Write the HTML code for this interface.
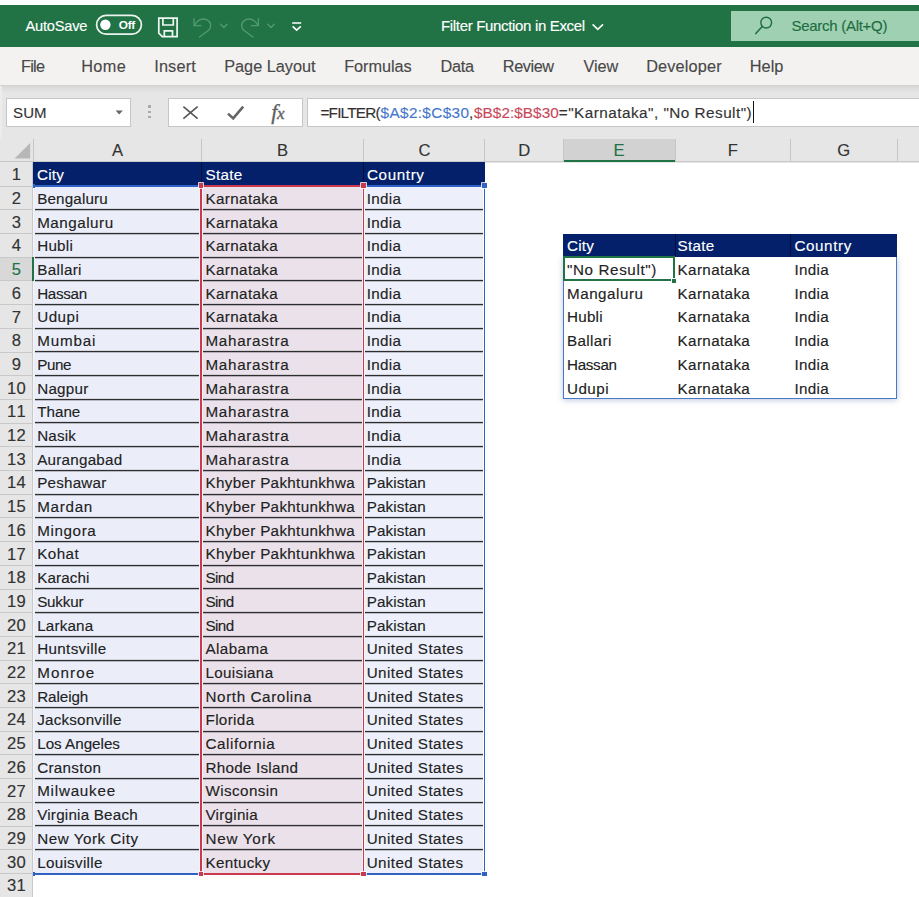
<!DOCTYPE html>
<html><head><meta charset="utf-8"><title>Filter Function in Excel</title>
<style>
html,body{margin:0;padding:0;background:#fff;}
body{width:919px;height:897px;position:relative;overflow:hidden;font-family:"Liberation Sans", sans-serif;}
.b{position:absolute;}
.t{position:absolute;-webkit-text-stroke:0.14px;white-space:pre;line-height:20px;font-family:"Liberation Sans", sans-serif;}
</style></head><body>
<div class="b" style="left:0.0px;top:5.0px;width:919.0px;height:42.0px;background:#217346;"></div>
<div class="b" style="left:731.0px;top:10.8px;width:188.0px;height:30.4px;background:#9fd0b2;"></div>
<div class="b" style="left:0.0px;top:47.0px;width:919.0px;height:37.5px;background:#f3f2f1;"></div>
<div class="b" style="left:0.0px;top:84.5px;width:919.0px;height:78.0px;background:#e6e6e6;"></div>
<div class="b" style="left:0.0px;top:84.5px;width:919.0px;height:8.0px;background:linear-gradient(#d1d1d1,#dcdcdc 35%,#e6e6e6);"></div>
<div class="b" style="left:0.0px;top:86.0px;width:2.0px;height:76.0px;background:#ececec;"></div>
<div class="b" style="left:6.3px;top:98.0px;width:124.7px;height:28.6px;background:#fff;border:1px solid #c6c6c6;box-sizing:border-box;"></div>
<div class="b" style="left:148.2px;top:105.3px;width:2.6px;height:2.6px;background:#aaa;"></div>
<div class="b" style="left:148.2px;top:110.5px;width:2.6px;height:2.6px;background:#aaa;"></div>
<div class="b" style="left:148.2px;top:115.7px;width:2.6px;height:2.6px;background:#aaa;"></div>
<div class="b" style="left:168.2px;top:98.0px;width:134.8px;height:28.6px;background:#fff;border:1px solid #c6c6c6;box-sizing:border-box;"></div>
<div class="b" style="left:306.5px;top:98.0px;width:620.0px;height:28.6px;background:#fff;border:1px solid #c6c6c6;box-sizing:border-box;"></div>
<div class="b" style="left:752.6px;top:101.3px;width:1.2px;height:21.4px;background:#111;"></div>
<div class="b" style="left:0.0px;top:139.3px;width:919.0px;height:23.1px;background:#e6e6e6;"></div>
<div class="b" style="left:563.0px;top:139.3px;width:112.0px;height:23.1px;background:#d2d2d2;border-bottom:2px solid #217346;box-sizing:border-box;"></div>
<div class="b" style="left:32.5px;top:138.8px;width:1.0px;height:23.6px;background:#c6c6c6;"></div>
<div class="b" style="left:200.8px;top:138.8px;width:1.0px;height:23.6px;background:#c6c6c6;"></div>
<div class="b" style="left:363.0px;top:138.8px;width:1.0px;height:23.6px;background:#c6c6c6;"></div>
<div class="b" style="left:484.0px;top:138.8px;width:1.0px;height:23.6px;background:#c6c6c6;"></div>
<div class="b" style="left:562.5px;top:138.8px;width:1.0px;height:23.6px;background:#c6c6c6;"></div>
<div class="b" style="left:674.5px;top:138.8px;width:1.0px;height:23.6px;background:#c6c6c6;"></div>
<div class="b" style="left:789.5px;top:138.8px;width:1.0px;height:23.6px;background:#c6c6c6;"></div>
<div class="b" style="left:896.5px;top:138.8px;width:1.0px;height:23.6px;background:#c6c6c6;"></div>
<div class="b" style="left:0.0px;top:161.4px;width:563.0px;height:1.0px;background:#c9c9c9;"></div>
<div class="b" style="left:675.0px;top:161.4px;width:244.0px;height:1.0px;background:#c9c9c9;"></div>
<div class="b" style="left:0.0px;top:162.4px;width:33.0px;height:734.6px;background:#e6e6e6;"></div>
<div class="b" style="left:0.0px;top:257.2px;width:33.0px;height:23.7px;background:#d8d8d8;"></div>
<div class="b" style="left:0.0px;top:185.6px;width:33.0px;height:1.0px;background:#c9c9c9;"></div>
<div class="b" style="left:0.0px;top:209.3px;width:33.0px;height:1.0px;background:#c9c9c9;"></div>
<div class="b" style="left:0.0px;top:233.0px;width:33.0px;height:1.0px;background:#c9c9c9;"></div>
<div class="b" style="left:0.0px;top:256.7px;width:33.0px;height:1.0px;background:#c9c9c9;"></div>
<div class="b" style="left:0.0px;top:280.4px;width:33.0px;height:1.0px;background:#c9c9c9;"></div>
<div class="b" style="left:0.0px;top:304.1px;width:33.0px;height:1.0px;background:#c9c9c9;"></div>
<div class="b" style="left:0.0px;top:327.8px;width:33.0px;height:1.0px;background:#c9c9c9;"></div>
<div class="b" style="left:0.0px;top:351.5px;width:33.0px;height:1.0px;background:#c9c9c9;"></div>
<div class="b" style="left:0.0px;top:375.2px;width:33.0px;height:1.0px;background:#c9c9c9;"></div>
<div class="b" style="left:0.0px;top:398.9px;width:33.0px;height:1.0px;background:#c9c9c9;"></div>
<div class="b" style="left:0.0px;top:422.6px;width:33.0px;height:1.0px;background:#c9c9c9;"></div>
<div class="b" style="left:0.0px;top:446.3px;width:33.0px;height:1.0px;background:#c9c9c9;"></div>
<div class="b" style="left:0.0px;top:470.0px;width:33.0px;height:1.0px;background:#c9c9c9;"></div>
<div class="b" style="left:0.0px;top:493.7px;width:33.0px;height:1.0px;background:#c9c9c9;"></div>
<div class="b" style="left:0.0px;top:517.4px;width:33.0px;height:1.0px;background:#c9c9c9;"></div>
<div class="b" style="left:0.0px;top:541.1px;width:33.0px;height:1.0px;background:#c9c9c9;"></div>
<div class="b" style="left:0.0px;top:564.8px;width:33.0px;height:1.0px;background:#c9c9c9;"></div>
<div class="b" style="left:0.0px;top:588.5px;width:33.0px;height:1.0px;background:#c9c9c9;"></div>
<div class="b" style="left:0.0px;top:612.2px;width:33.0px;height:1.0px;background:#c9c9c9;"></div>
<div class="b" style="left:0.0px;top:635.9px;width:33.0px;height:1.0px;background:#c9c9c9;"></div>
<div class="b" style="left:0.0px;top:659.6px;width:33.0px;height:1.0px;background:#c9c9c9;"></div>
<div class="b" style="left:0.0px;top:683.3px;width:33.0px;height:1.0px;background:#c9c9c9;"></div>
<div class="b" style="left:0.0px;top:707.0px;width:33.0px;height:1.0px;background:#c9c9c9;"></div>
<div class="b" style="left:0.0px;top:730.7px;width:33.0px;height:1.0px;background:#c9c9c9;"></div>
<div class="b" style="left:0.0px;top:754.4px;width:33.0px;height:1.0px;background:#c9c9c9;"></div>
<div class="b" style="left:0.0px;top:778.1px;width:33.0px;height:1.0px;background:#c9c9c9;"></div>
<div class="b" style="left:0.0px;top:801.8px;width:33.0px;height:1.0px;background:#c9c9c9;"></div>
<div class="b" style="left:0.0px;top:825.5px;width:33.0px;height:1.0px;background:#c9c9c9;"></div>
<div class="b" style="left:0.0px;top:849.2px;width:33.0px;height:1.0px;background:#c9c9c9;"></div>
<div class="b" style="left:0.0px;top:872.9px;width:33.0px;height:1.0px;background:#c9c9c9;"></div>
<div class="b" style="left:32.0px;top:162.4px;width:1.0px;height:734.6px;background:#c9c9c9;"></div>
<svg class="b" style="left:14px;top:143.4px" width="18" height="18"><polygon points="16.2,0 16.2,15.4 0.6,15.4" fill="#b7b7b7"/></svg>
<div class="b" style="left:33.0px;top:162.4px;width:451.5px;height:23.7px;background:#04206a;"></div>
<div class="b" style="left:33.0px;top:186.1px;width:168.3px;height:687.3px;background:#ebeef9;"></div>
<div class="b" style="left:201.3px;top:186.1px;width:162.2px;height:687.3px;background:#eae1ea;"></div>
<div class="b" style="left:363.5px;top:186.1px;width:121.0px;height:687.3px;background:#edf0fa;"></div>
<div class="b" style="left:200.8px;top:162.4px;width:1.0px;height:23.7px;background:#02103f;"></div>
<div class="b" style="left:363.0px;top:162.4px;width:1.0px;height:23.7px;background:#02103f;"></div>
<div class="b" style="left:34.5px;top:209.0px;width:450.0px;height:1.0px;background:#2e2e2e;box-shadow:0 1px 0 rgba(50,50,60,.28), 0 -1px 0 rgba(50,50,60,.12);"></div>
<div class="b" style="left:34.5px;top:233.0px;width:450.0px;height:1.0px;background:#2e2e2e;box-shadow:0 1px 0 rgba(50,50,60,.28), 0 -1px 0 rgba(50,50,60,.12);"></div>
<div class="b" style="left:34.5px;top:257.0px;width:450.0px;height:1.0px;background:#2e2e2e;box-shadow:0 1px 0 rgba(50,50,60,.28), 0 -1px 0 rgba(50,50,60,.12);"></div>
<div class="b" style="left:34.5px;top:280.0px;width:450.0px;height:1.0px;background:#2e2e2e;box-shadow:0 1px 0 rgba(50,50,60,.28), 0 -1px 0 rgba(50,50,60,.12);"></div>
<div class="b" style="left:34.5px;top:304.0px;width:450.0px;height:1.0px;background:#2e2e2e;box-shadow:0 1px 0 rgba(50,50,60,.28), 0 -1px 0 rgba(50,50,60,.12);"></div>
<div class="b" style="left:34.5px;top:328.0px;width:450.0px;height:1.0px;background:#2e2e2e;box-shadow:0 1px 0 rgba(50,50,60,.28), 0 -1px 0 rgba(50,50,60,.12);"></div>
<div class="b" style="left:34.5px;top:351.0px;width:450.0px;height:1.0px;background:#2e2e2e;box-shadow:0 1px 0 rgba(50,50,60,.28), 0 -1px 0 rgba(50,50,60,.12);"></div>
<div class="b" style="left:34.5px;top:375.0px;width:450.0px;height:1.0px;background:#2e2e2e;box-shadow:0 1px 0 rgba(50,50,60,.28), 0 -1px 0 rgba(50,50,60,.12);"></div>
<div class="b" style="left:34.5px;top:399.0px;width:450.0px;height:1.0px;background:#2e2e2e;box-shadow:0 1px 0 rgba(50,50,60,.28), 0 -1px 0 rgba(50,50,60,.12);"></div>
<div class="b" style="left:34.5px;top:422.0px;width:450.0px;height:1.0px;background:#2e2e2e;box-shadow:0 1px 0 rgba(50,50,60,.28), 0 -1px 0 rgba(50,50,60,.12);"></div>
<div class="b" style="left:34.5px;top:446.0px;width:450.0px;height:1.0px;background:#2e2e2e;box-shadow:0 1px 0 rgba(50,50,60,.28), 0 -1px 0 rgba(50,50,60,.12);"></div>
<div class="b" style="left:34.5px;top:470.0px;width:450.0px;height:1.0px;background:#2e2e2e;box-shadow:0 1px 0 rgba(50,50,60,.28), 0 -1px 0 rgba(50,50,60,.12);"></div>
<div class="b" style="left:34.5px;top:494.0px;width:450.0px;height:1.0px;background:#2e2e2e;box-shadow:0 1px 0 rgba(50,50,60,.28), 0 -1px 0 rgba(50,50,60,.12);"></div>
<div class="b" style="left:34.5px;top:517.0px;width:450.0px;height:1.0px;background:#2e2e2e;box-shadow:0 1px 0 rgba(50,50,60,.28), 0 -1px 0 rgba(50,50,60,.12);"></div>
<div class="b" style="left:34.5px;top:541.0px;width:450.0px;height:1.0px;background:#2e2e2e;box-shadow:0 1px 0 rgba(50,50,60,.28), 0 -1px 0 rgba(50,50,60,.12);"></div>
<div class="b" style="left:34.5px;top:565.0px;width:450.0px;height:1.0px;background:#2e2e2e;box-shadow:0 1px 0 rgba(50,50,60,.28), 0 -1px 0 rgba(50,50,60,.12);"></div>
<div class="b" style="left:34.5px;top:588.0px;width:450.0px;height:1.0px;background:#2e2e2e;box-shadow:0 1px 0 rgba(50,50,60,.28), 0 -1px 0 rgba(50,50,60,.12);"></div>
<div class="b" style="left:34.5px;top:612.0px;width:450.0px;height:1.0px;background:#2e2e2e;box-shadow:0 1px 0 rgba(50,50,60,.28), 0 -1px 0 rgba(50,50,60,.12);"></div>
<div class="b" style="left:34.5px;top:636.0px;width:450.0px;height:1.0px;background:#2e2e2e;box-shadow:0 1px 0 rgba(50,50,60,.28), 0 -1px 0 rgba(50,50,60,.12);"></div>
<div class="b" style="left:34.5px;top:660.0px;width:450.0px;height:1.0px;background:#2e2e2e;box-shadow:0 1px 0 rgba(50,50,60,.28), 0 -1px 0 rgba(50,50,60,.12);"></div>
<div class="b" style="left:34.5px;top:683.0px;width:450.0px;height:1.0px;background:#2e2e2e;box-shadow:0 1px 0 rgba(50,50,60,.28), 0 -1px 0 rgba(50,50,60,.12);"></div>
<div class="b" style="left:34.5px;top:707.0px;width:450.0px;height:1.0px;background:#2e2e2e;box-shadow:0 1px 0 rgba(50,50,60,.28), 0 -1px 0 rgba(50,50,60,.12);"></div>
<div class="b" style="left:34.5px;top:731.0px;width:450.0px;height:1.0px;background:#2e2e2e;box-shadow:0 1px 0 rgba(50,50,60,.28), 0 -1px 0 rgba(50,50,60,.12);"></div>
<div class="b" style="left:34.5px;top:754.0px;width:450.0px;height:1.0px;background:#2e2e2e;box-shadow:0 1px 0 rgba(50,50,60,.28), 0 -1px 0 rgba(50,50,60,.12);"></div>
<div class="b" style="left:34.5px;top:778.0px;width:450.0px;height:1.0px;background:#2e2e2e;box-shadow:0 1px 0 rgba(50,50,60,.28), 0 -1px 0 rgba(50,50,60,.12);"></div>
<div class="b" style="left:34.5px;top:802.0px;width:450.0px;height:1.0px;background:#2e2e2e;box-shadow:0 1px 0 rgba(50,50,60,.28), 0 -1px 0 rgba(50,50,60,.12);"></div>
<div class="b" style="left:34.5px;top:825.0px;width:450.0px;height:1.0px;background:#2e2e2e;box-shadow:0 1px 0 rgba(50,50,60,.28), 0 -1px 0 rgba(50,50,60,.12);"></div>
<div class="b" style="left:34.5px;top:849.0px;width:450.0px;height:1.0px;background:#2e2e2e;box-shadow:0 1px 0 rgba(50,50,60,.28), 0 -1px 0 rgba(50,50,60,.12);"></div>
<div class="b" style="left:33.0px;top:184.5px;width:452.5px;height:2.0px;background:#2f62c4;"></div>
<div class="b" style="left:33.0px;top:872.8px;width:452.5px;height:2.0px;background:#2f62c4;"></div>
<div class="b" style="left:483.6px;top:185.1px;width:1.7px;height:688.8px;background:#2f62c4;box-shadow:0 0 0 1px #fff;"></div>
<div class="b" style="left:32.8px;top:186.1px;width:1.4px;height:687.3px;background:#f4f4f8;"></div>
<div class="b" style="left:200.4px;top:184.5px;width:1.7px;height:690.3px;background:#c93a4e;box-shadow:0 0 0 1px #f7f3f7;"></div>
<div class="b" style="left:362.6px;top:184.5px;width:1.7px;height:690.3px;background:#c93a4e;box-shadow:0 0 0 1px #f7f3f7;"></div>
<div class="b" style="left:201.3px;top:184.5px;width:162.2px;height:2.0px;background:#c93a4e;"></div>
<div class="b" style="left:201.3px;top:872.8px;width:162.2px;height:2.0px;background:#c93a4e;"></div>
<div class="b" style="left:199.1px;top:183.3px;width:4.4px;height:4.4px;background:#c93a4e;box-shadow:0 0 0 0.8px #fff;"></div>
<div class="b" style="left:361.3px;top:183.3px;width:4.4px;height:4.4px;background:#c93a4e;box-shadow:0 0 0 0.8px #fff;"></div>
<div class="b" style="left:482.3px;top:183.3px;width:4.4px;height:4.4px;background:#2f62c4;box-shadow:0 0 0 0.8px #fff;"></div>
<div class="b" style="left:32.5px;top:183.5px;width:2.0px;height:4.0px;background:#2f62c4;"></div>
<div class="b" style="left:199.1px;top:871.6px;width:4.4px;height:4.4px;background:#c93a4e;box-shadow:0 0 0 0.8px #fff;"></div>
<div class="b" style="left:361.3px;top:871.6px;width:4.4px;height:4.4px;background:#c93a4e;box-shadow:0 0 0 0.8px #fff;"></div>
<div class="b" style="left:482.3px;top:871.6px;width:4.4px;height:4.4px;background:#2f62c4;box-shadow:0 0 0 0.8px #fff;"></div>
<div class="b" style="left:32.5px;top:871.8px;width:2.0px;height:4.0px;background:#2f62c4;"></div>
<div class="b" style="left:563.0px;top:233.5px;width:334.0px;height:23.7px;background:#04206a;"></div>
<div class="b" style="left:674.5px;top:233.5px;width:1.0px;height:23.7px;background:#02103f;"></div>
<div class="b" style="left:789.5px;top:233.5px;width:1.0px;height:23.7px;background:#02103f;"></div>
<div class="b" style="left:563.0px;top:256.7px;width:334.0px;height:142.5px;border:1px solid #4a78c8;border-top:none;box-sizing:border-box;box-shadow:0 1px 6px rgba(60,90,160,.35);"></div>
<div class="b" style="left:563.0px;top:233.5px;width:334.0px;height:23.7px;background:#04206a;"></div>
<div class="b" style="left:674.5px;top:233.5px;width:1.0px;height:23.7px;background:#02103f;"></div>
<div class="b" style="left:789.5px;top:233.5px;width:1.0px;height:23.7px;background:#02103f;"></div>
<div class="b" style="left:562.5px;top:256.2px;width:112.5px;height:25.3px;background:#fff;border:2px solid #217346;box-sizing:border-box;"></div>
<div class="b" style="left:672.4px;top:278.9px;width:4.0px;height:4.0px;background:#217346;box-shadow:0 0 0 1px #fff;"></div>
<div class="b" style="left:31.8px;top:256.8px;width:2.2px;height:24.3px;background:#217346;"></div>
<svg class="b" style="left:0;top:0" width="919" height="140" viewBox="0 0 919 140" fill="none">
<!-- autosave toggle -->
<rect x="96.6" y="15.4" width="44.8" height="18.8" rx="9.4" stroke="#eaf5ee" stroke-width="1.7"/>
<circle cx="105.4" cy="24.8" r="5.2" fill="#fff"/>
<!-- save icon -->
<path d="M158.8 18.2 H177.1 V36.6 H162.3 L158.8 33.1 Z" stroke="#f0f8f3" stroke-width="1.7"/>
<path d="M162.9 18.2 V25 H173.3 V18.2" stroke="#f0f8f3" stroke-width="1.7"/>
<path d="M164.3 36.6 V30.8 H172.5 V36.6" stroke="#f0f8f3" stroke-width="1.7"/>
<!-- undo -->
<g stroke="#539873" stroke-width="1.4" stroke-linecap="round" stroke-linejoin="round">
<path d="M194 18.6 V25.6 H201"/>
<path d="M194.6 25 C197 20.5 202 17.8 206.5 19.6 C211 21.6 212 26.5 209 30 L199.5 37"/>
<path d="M220.6 24.3 L223.8 27.5 L227 24.3"/>
<!-- redo -->
<path d="M258.4 18.6 V25.6 H251.4"/>
<path d="M257.8 25 C255.4 20.5 250.4 17.8 245.9 19.6 C241.4 21.6 240.4 26.5 243.4 30 L252.9 37"/>
<path d="M267.8 24.3 L271 27.5 L274.2 24.3"/>
</g>
<!-- QAT customize -->
<path d="M292.2 23 H301.2" stroke="#fff" stroke-width="1.5"/>
<path d="M292.6 26.4 L296.7 30.2 L300.8 26.4" stroke="#fff" stroke-width="1.6"/>
<!-- title chevron -->
<path d="M592.6 24.4 L597.8 29.4 L603 24.4" stroke="#f0f8f3" stroke-width="1.7"/>
<!-- search icon -->
<circle cx="766.2" cy="22.6" r="5.4" stroke="#1e6c41" stroke-width="1.4"/>
<path d="M762.2 26.6 L755.8 33.6" stroke="#1e6c41" stroke-width="1.5" stroke-linecap="round"/>
<!-- name box arrow -->
<path d="M115.6 110.6 H122.8 L119.2 114.6 Z" fill="#666"/>
<!-- cancel X -->
<path d="M183.4 106.6 L197.6 118.6 M197.6 106.6 L183.4 118.6" stroke="#555" stroke-width="1.6"/>
<!-- check -->
<path d="M228 113.6 L233.2 118.4 L243.2 106.6" stroke="#666" stroke-width="2.6"/>
</svg>
<span class="t" style="left:271.2px;top:100.4px;font-size:22px;line-height:24px;font-style:italic;font-weight:400;color:#606060;-webkit-text-stroke:0.35px #606060;font-family:'Liberation Serif',serif;letter-spacing:-0.4px">f<span style="font-size:17px">x</span></span>

<span class="t" style="left:25.5px;top:15.6px;font-size:14.6px;color:#fff;letter-spacing:-0.19px;">AutoSave</span>
<span class="t" style="left:118.8px;top:14.9px;font-size:11.8px;color:#fff;letter-spacing:-0.27px;font-weight:700;-webkit-text-stroke:0;">Off</span>
<span class="t" style="left:441.0px;top:16.1px;font-size:15px;color:#fff;letter-spacing:-0.33px;">Filter Function in Excel</span>
<span class="t" style="left:791.5px;top:16.2px;font-size:15px;color:#1e6c41;letter-spacing:-0.28px;">Search (Alt+Q)</span>
<span class="t" style="left:21.0px;top:56.2px;font-size:16.3px;color:#484848;letter-spacing:-0.75px;">File</span>
<span class="t" style="left:81.2px;top:56.2px;font-size:16.3px;color:#484848;letter-spacing:0.39px;">Home</span>
<span class="t" style="left:154.2px;top:56.2px;font-size:16.3px;color:#484848;letter-spacing:0.17px;">Insert</span>
<span class="t" style="left:224.2px;top:56.2px;font-size:16.3px;color:#484848;">Page Layout</span>
<span class="t" style="left:344.2px;top:56.2px;font-size:16.3px;color:#484848;letter-spacing:-0.05px;">Formulas</span>
<span class="t" style="left:440.4px;top:56.2px;font-size:16.3px;color:#484848;letter-spacing:-0.24px;">Data</span>
<span class="t" style="left:502.8px;top:56.2px;font-size:16.3px;color:#484848;letter-spacing:-0.42px;">Review</span>
<span class="t" style="left:583.4px;top:56.2px;font-size:16.3px;color:#484848;letter-spacing:-0.07px;">View</span>
<span class="t" style="left:646.2px;top:56.2px;font-size:16.3px;color:#484848;letter-spacing:0.16px;">Developer</span>
<span class="t" style="left:749.7px;top:56.2px;font-size:16.3px;color:#484848;letter-spacing:0.07px;">Help</span>
<span class="t" style="left:13.0px;top:103.1px;font-size:15px;color:#333;letter-spacing:0.13px;">SUM</span>
<span class="t" style="left:320.4px;top:103.0px;font-size:15.3px;color:#333;letter-spacing:-0.77px;">=FILTER(</span>
<span class="t" style="left:380.6px;top:103.0px;font-size:15.3px;color:#4576cc;letter-spacing:0.36px;">$A$2:$C$30</span>
<span class="t" style="left:468.9px;top:103.0px;font-size:15.3px;color:#333;">,</span>
<span class="t" style="left:474.0px;top:103.0px;font-size:15.3px;color:#c8485a;letter-spacing:0.06px;">$B$2:$B$30</span>
<span class="t" style="left:558.8px;top:103.0px;font-size:15.3px;color:#333;letter-spacing:0.47px;">="Karnataka", "No Result")</span>
<span class="t" style="left:112.1px;top:141.2px;font-size:16.6px;color:#333;">A</span>
<span class="t" style="left:277.0px;top:141.2px;font-size:16.6px;color:#333;">B</span>
<span class="t" style="left:418.5px;top:141.2px;font-size:16.6px;color:#333;">C</span>
<span class="t" style="left:518.3px;top:141.2px;font-size:16.6px;color:#333;">D</span>
<span class="t" style="left:613.5px;top:141.2px;font-size:16.6px;color:#217346;">E</span>
<span class="t" style="left:727.7px;top:141.2px;font-size:16.6px;color:#333;">F</span>
<span class="t" style="left:837.3px;top:141.2px;font-size:16.6px;color:#333;">G</span>
<span class="t" style="left:11.7px;top:165.3px;font-size:16.6px;color:#333;">1</span>
<span class="t" style="left:11.7px;top:189.0px;font-size:16.6px;color:#333;">2</span>
<span class="t" style="left:11.7px;top:212.7px;font-size:16.6px;color:#333;">3</span>
<span class="t" style="left:11.7px;top:236.4px;font-size:16.6px;color:#333;">4</span>
<span class="t" style="left:11.7px;top:260.1px;font-size:16.6px;color:#217346;">5</span>
<span class="t" style="left:11.7px;top:283.8px;font-size:16.6px;color:#333;">6</span>
<span class="t" style="left:11.7px;top:307.5px;font-size:16.6px;color:#333;">7</span>
<span class="t" style="left:11.7px;top:331.2px;font-size:16.6px;color:#333;">8</span>
<span class="t" style="left:11.7px;top:354.9px;font-size:16.6px;color:#333;">9</span>
<span class="t" style="left:6.9px;top:378.6px;font-size:16.6px;color:#333;letter-spacing:0.39px;">10</span>
<span class="t" style="left:6.9px;top:402.3px;font-size:16.6px;color:#333;letter-spacing:1.62px;">11</span>
<span class="t" style="left:6.9px;top:426.0px;font-size:16.6px;color:#333;letter-spacing:0.39px;">12</span>
<span class="t" style="left:6.9px;top:449.7px;font-size:16.6px;color:#333;letter-spacing:0.39px;">13</span>
<span class="t" style="left:6.9px;top:473.4px;font-size:16.6px;color:#333;letter-spacing:0.39px;">14</span>
<span class="t" style="left:6.9px;top:497.1px;font-size:16.6px;color:#333;letter-spacing:0.39px;">15</span>
<span class="t" style="left:6.9px;top:520.8px;font-size:16.6px;color:#333;letter-spacing:0.39px;">16</span>
<span class="t" style="left:6.9px;top:544.5px;font-size:16.6px;color:#333;letter-spacing:0.39px;">17</span>
<span class="t" style="left:6.9px;top:568.2px;font-size:16.6px;color:#333;letter-spacing:0.39px;">18</span>
<span class="t" style="left:6.9px;top:591.9px;font-size:16.6px;color:#333;letter-spacing:0.39px;">19</span>
<span class="t" style="left:6.9px;top:615.6px;font-size:16.6px;color:#333;letter-spacing:0.39px;">20</span>
<span class="t" style="left:6.9px;top:639.3px;font-size:16.6px;color:#333;letter-spacing:0.39px;">21</span>
<span class="t" style="left:6.9px;top:663.0px;font-size:16.6px;color:#333;letter-spacing:0.39px;">22</span>
<span class="t" style="left:6.9px;top:686.7px;font-size:16.6px;color:#333;letter-spacing:0.39px;">23</span>
<span class="t" style="left:6.9px;top:710.4px;font-size:16.6px;color:#333;letter-spacing:0.39px;">24</span>
<span class="t" style="left:6.9px;top:734.1px;font-size:16.6px;color:#333;letter-spacing:0.39px;">25</span>
<span class="t" style="left:6.9px;top:757.8px;font-size:16.6px;color:#333;letter-spacing:0.39px;">26</span>
<span class="t" style="left:6.9px;top:781.5px;font-size:16.6px;color:#333;letter-spacing:0.39px;">27</span>
<span class="t" style="left:6.9px;top:805.2px;font-size:16.6px;color:#333;letter-spacing:0.39px;">28</span>
<span class="t" style="left:6.9px;top:828.9px;font-size:16.6px;color:#333;letter-spacing:0.39px;">29</span>
<span class="t" style="left:6.9px;top:852.6px;font-size:16.6px;color:#333;letter-spacing:0.39px;">30</span>
<span class="t" style="left:6.9px;top:876.3px;font-size:16.6px;color:#333;letter-spacing:0.39px;">31</span>
<span class="t" style="left:37.0px;top:165.2px;font-size:15.2px;color:#fff;letter-spacing:0.21px;">City</span>
<span class="t" style="left:205.5px;top:165.2px;font-size:15.2px;color:#fff;letter-spacing:0.31px;">State</span>
<span class="t" style="left:367.0px;top:165.2px;font-size:15.2px;color:#fff;letter-spacing:0.62px;">Country</span>
<span class="t" style="left:37.2px;top:188.9px;font-size:15.2px;color:#222;letter-spacing:0.17px;">Bengaluru</span>
<span class="t" style="left:205.5px;top:188.9px;font-size:15.2px;color:#222;letter-spacing:0.37px;">Karnataka</span>
<span class="t" style="left:366.7px;top:188.9px;font-size:15.2px;color:#222;letter-spacing:0.34px;">India</span>
<span class="t" style="left:37.2px;top:212.6px;font-size:15.2px;color:#222;letter-spacing:0.52px;">Mangaluru</span>
<span class="t" style="left:205.5px;top:212.6px;font-size:15.2px;color:#222;letter-spacing:0.37px;">Karnataka</span>
<span class="t" style="left:366.7px;top:212.6px;font-size:15.2px;color:#222;letter-spacing:0.34px;">India</span>
<span class="t" style="left:37.2px;top:236.3px;font-size:15.2px;color:#222;letter-spacing:0.24px;">Hubli</span>
<span class="t" style="left:205.5px;top:236.3px;font-size:15.2px;color:#222;letter-spacing:0.37px;">Karnataka</span>
<span class="t" style="left:366.7px;top:236.3px;font-size:15.2px;color:#222;letter-spacing:0.34px;">India</span>
<span class="t" style="left:37.2px;top:260.0px;font-size:15.2px;color:#222;letter-spacing:0.35px;">Ballari</span>
<span class="t" style="left:205.5px;top:260.0px;font-size:15.2px;color:#222;letter-spacing:0.37px;">Karnataka</span>
<span class="t" style="left:366.7px;top:260.0px;font-size:15.2px;color:#222;letter-spacing:0.34px;">India</span>
<span class="t" style="left:37.2px;top:283.7px;font-size:15.2px;color:#222;letter-spacing:-0.3px;">Hassan</span>
<span class="t" style="left:205.5px;top:283.7px;font-size:15.2px;color:#222;letter-spacing:0.37px;">Karnataka</span>
<span class="t" style="left:366.7px;top:283.7px;font-size:15.2px;color:#222;letter-spacing:0.34px;">India</span>
<span class="t" style="left:37.2px;top:307.4px;font-size:15.2px;color:#222;letter-spacing:0.48px;">Udupi</span>
<span class="t" style="left:205.5px;top:307.4px;font-size:15.2px;color:#222;letter-spacing:0.37px;">Karnataka</span>
<span class="t" style="left:366.7px;top:307.4px;font-size:15.2px;color:#222;letter-spacing:0.34px;">India</span>
<span class="t" style="left:37.2px;top:331.1px;font-size:15.2px;color:#222;letter-spacing:0.85px;">Mumbai</span>
<span class="t" style="left:205.5px;top:331.1px;font-size:15.2px;color:#222;letter-spacing:0.71px;">Maharastra</span>
<span class="t" style="left:366.7px;top:331.1px;font-size:15.2px;color:#222;letter-spacing:0.34px;">India</span>
<span class="t" style="left:37.2px;top:354.8px;font-size:15.2px;color:#222;letter-spacing:-0.43px;">Pune</span>
<span class="t" style="left:205.5px;top:354.8px;font-size:15.2px;color:#222;letter-spacing:0.71px;">Maharastra</span>
<span class="t" style="left:366.7px;top:354.8px;font-size:15.2px;color:#222;letter-spacing:0.34px;">India</span>
<span class="t" style="left:37.2px;top:378.5px;font-size:15.2px;color:#222;letter-spacing:0.26px;">Nagpur</span>
<span class="t" style="left:205.5px;top:378.5px;font-size:15.2px;color:#222;letter-spacing:0.71px;">Maharastra</span>
<span class="t" style="left:366.7px;top:378.5px;font-size:15.2px;color:#222;letter-spacing:0.34px;">India</span>
<span class="t" style="left:37.2px;top:402.2px;font-size:15.2px;color:#222;letter-spacing:0.01px;">Thane</span>
<span class="t" style="left:205.5px;top:402.2px;font-size:15.2px;color:#222;letter-spacing:0.71px;">Maharastra</span>
<span class="t" style="left:366.7px;top:402.2px;font-size:15.2px;color:#222;letter-spacing:0.34px;">India</span>
<span class="t" style="left:37.2px;top:425.9px;font-size:15.2px;color:#222;letter-spacing:0.2px;">Nasik</span>
<span class="t" style="left:205.5px;top:425.9px;font-size:15.2px;color:#222;letter-spacing:0.71px;">Maharastra</span>
<span class="t" style="left:366.7px;top:425.9px;font-size:15.2px;color:#222;letter-spacing:0.34px;">India</span>
<span class="t" style="left:37.2px;top:449.6px;font-size:15.2px;color:#222;letter-spacing:0.25px;">Aurangabad</span>
<span class="t" style="left:205.5px;top:449.6px;font-size:15.2px;color:#222;letter-spacing:0.71px;">Maharastra</span>
<span class="t" style="left:366.7px;top:449.6px;font-size:15.2px;color:#222;letter-spacing:0.34px;">India</span>
<span class="t" style="left:37.2px;top:473.3px;font-size:15.2px;color:#222;letter-spacing:0.21px;">Peshawar</span>
<span class="t" style="left:205.5px;top:473.3px;font-size:15.2px;color:#222;letter-spacing:0.33px;">Khyber Pakhtunkhwa</span>
<span class="t" style="left:366.7px;top:473.3px;font-size:15.2px;color:#222;letter-spacing:0.12px;">Pakistan</span>
<span class="t" style="left:37.2px;top:497.0px;font-size:15.2px;color:#222;letter-spacing:0.72px;">Mardan</span>
<span class="t" style="left:205.5px;top:497.0px;font-size:15.2px;color:#222;letter-spacing:0.33px;">Khyber Pakhtunkhwa</span>
<span class="t" style="left:366.7px;top:497.0px;font-size:15.2px;color:#222;letter-spacing:0.12px;">Pakistan</span>
<span class="t" style="left:37.2px;top:520.7px;font-size:15.2px;color:#222;letter-spacing:0.62px;">Mingora</span>
<span class="t" style="left:205.5px;top:520.7px;font-size:15.2px;color:#222;letter-spacing:0.33px;">Khyber Pakhtunkhwa</span>
<span class="t" style="left:366.7px;top:520.7px;font-size:15.2px;color:#222;letter-spacing:0.12px;">Pakistan</span>
<span class="t" style="left:37.2px;top:544.4px;font-size:15.2px;color:#222;letter-spacing:0.45px;">Kohat</span>
<span class="t" style="left:205.5px;top:544.4px;font-size:15.2px;color:#222;letter-spacing:0.33px;">Khyber Pakhtunkhwa</span>
<span class="t" style="left:366.7px;top:544.4px;font-size:15.2px;color:#222;letter-spacing:0.12px;">Pakistan</span>
<span class="t" style="left:37.2px;top:568.1px;font-size:15.2px;color:#222;letter-spacing:0.12px;">Karachi</span>
<span class="t" style="left:205.5px;top:568.1px;font-size:15.2px;color:#222;letter-spacing:-0.57px;">Sind</span>
<span class="t" style="left:366.7px;top:568.1px;font-size:15.2px;color:#222;letter-spacing:0.12px;">Pakistan</span>
<span class="t" style="left:37.2px;top:591.8px;font-size:15.2px;color:#222;letter-spacing:-0.2px;">Sukkur</span>
<span class="t" style="left:205.5px;top:591.8px;font-size:15.2px;color:#222;letter-spacing:-0.57px;">Sind</span>
<span class="t" style="left:366.7px;top:591.8px;font-size:15.2px;color:#222;letter-spacing:0.12px;">Pakistan</span>
<span class="t" style="left:37.2px;top:615.5px;font-size:15.2px;color:#222;letter-spacing:0.17px;">Larkana</span>
<span class="t" style="left:205.5px;top:615.5px;font-size:15.2px;color:#222;letter-spacing:-0.57px;">Sind</span>
<span class="t" style="left:366.7px;top:615.5px;font-size:15.2px;color:#222;letter-spacing:0.12px;">Pakistan</span>
<span class="t" style="left:37.2px;top:639.2px;font-size:15.2px;color:#222;letter-spacing:0.35px;">Huntsville</span>
<span class="t" style="left:205.5px;top:639.2px;font-size:15.2px;color:#222;letter-spacing:0.41px;">Alabama</span>
<span class="t" style="left:366.7px;top:639.2px;font-size:15.2px;color:#222;letter-spacing:0.43px;">United States</span>
<span class="t" style="left:37.2px;top:662.9px;font-size:15.2px;color:#222;letter-spacing:1.1px;">Monroe</span>
<span class="t" style="left:205.5px;top:662.9px;font-size:15.2px;color:#222;letter-spacing:0.32px;">Louisiana</span>
<span class="t" style="left:366.7px;top:662.9px;font-size:15.2px;color:#222;letter-spacing:0.43px;">United States</span>
<span class="t" style="left:37.2px;top:686.6px;font-size:15.2px;color:#222;letter-spacing:-0.07px;">Raleigh</span>
<span class="t" style="left:205.5px;top:686.6px;font-size:15.2px;color:#222;letter-spacing:0.61px;">North Carolina</span>
<span class="t" style="left:366.7px;top:686.6px;font-size:15.2px;color:#222;letter-spacing:0.43px;">United States</span>
<span class="t" style="left:37.2px;top:710.3px;font-size:15.2px;color:#222;letter-spacing:0.21px;">Jacksonville</span>
<span class="t" style="left:205.5px;top:710.3px;font-size:15.2px;color:#222;letter-spacing:0.36px;">Florida</span>
<span class="t" style="left:366.7px;top:710.3px;font-size:15.2px;color:#222;letter-spacing:0.43px;">United States</span>
<span class="t" style="left:37.2px;top:734.0px;font-size:15.2px;color:#222;">Los Angeles</span>
<span class="t" style="left:205.5px;top:734.0px;font-size:15.2px;color:#222;letter-spacing:0.56px;">California</span>
<span class="t" style="left:366.7px;top:734.0px;font-size:15.2px;color:#222;letter-spacing:0.43px;">United States</span>
<span class="t" style="left:37.2px;top:757.7px;font-size:15.2px;color:#222;letter-spacing:0.31px;">Cranston</span>
<span class="t" style="left:205.5px;top:757.7px;font-size:15.2px;color:#222;letter-spacing:0.26px;">Rhode Island</span>
<span class="t" style="left:366.7px;top:757.7px;font-size:15.2px;color:#222;letter-spacing:0.43px;">United States</span>
<span class="t" style="left:37.2px;top:781.4px;font-size:15.2px;color:#222;letter-spacing:0.77px;">Milwaukee</span>
<span class="t" style="left:205.5px;top:781.4px;font-size:15.2px;color:#222;letter-spacing:0.41px;">Wisconsin</span>
<span class="t" style="left:366.7px;top:781.4px;font-size:15.2px;color:#222;letter-spacing:0.43px;">United States</span>
<span class="t" style="left:37.2px;top:805.1px;font-size:15.2px;color:#222;letter-spacing:0.22px;">Virginia Beach</span>
<span class="t" style="left:205.5px;top:805.1px;font-size:15.2px;color:#222;letter-spacing:0.26px;">Virginia</span>
<span class="t" style="left:366.7px;top:805.1px;font-size:15.2px;color:#222;letter-spacing:0.43px;">United States</span>
<span class="t" style="left:37.2px;top:828.8px;font-size:15.2px;color:#222;letter-spacing:0.53px;">New York City</span>
<span class="t" style="left:205.5px;top:828.8px;font-size:15.2px;color:#222;letter-spacing:0.76px;">New York</span>
<span class="t" style="left:366.7px;top:828.8px;font-size:15.2px;color:#222;letter-spacing:0.43px;">United States</span>
<span class="t" style="left:37.2px;top:852.5px;font-size:15.2px;color:#222;letter-spacing:0.3px;">Louisville</span>
<span class="t" style="left:205.5px;top:852.5px;font-size:15.2px;color:#222;letter-spacing:0.3px;">Kentucky</span>
<span class="t" style="left:366.7px;top:852.5px;font-size:15.2px;color:#222;letter-spacing:0.43px;">United States</span>
<span class="t" style="left:567.0px;top:236.3px;font-size:15.2px;color:#fff;letter-spacing:0.21px;">City</span>
<span class="t" style="left:677.6px;top:236.3px;font-size:15.2px;color:#fff;letter-spacing:0.31px;">State</span>
<span class="t" style="left:794.4px;top:236.3px;font-size:15.2px;color:#fff;letter-spacing:0.62px;">Country</span>
<span class="t" style="left:567.0px;top:260.0px;font-size:15.2px;color:#222;letter-spacing:0.62px;">"No Result")</span>
<span class="t" style="left:677.6px;top:260.0px;font-size:15.2px;color:#222;letter-spacing:0.37px;">Karnataka</span>
<span class="t" style="left:794.4px;top:260.0px;font-size:15.2px;color:#222;letter-spacing:0.34px;">India</span>
<span class="t" style="left:567.0px;top:283.7px;font-size:15.2px;color:#222;letter-spacing:0.52px;">Mangaluru</span>
<span class="t" style="left:677.6px;top:283.7px;font-size:15.2px;color:#222;letter-spacing:0.37px;">Karnataka</span>
<span class="t" style="left:794.4px;top:283.7px;font-size:15.2px;color:#222;letter-spacing:0.34px;">India</span>
<span class="t" style="left:567.0px;top:307.4px;font-size:15.2px;color:#222;letter-spacing:0.24px;">Hubli</span>
<span class="t" style="left:677.6px;top:307.4px;font-size:15.2px;color:#222;letter-spacing:0.37px;">Karnataka</span>
<span class="t" style="left:794.4px;top:307.4px;font-size:15.2px;color:#222;letter-spacing:0.34px;">India</span>
<span class="t" style="left:567.0px;top:331.1px;font-size:15.2px;color:#222;letter-spacing:0.35px;">Ballari</span>
<span class="t" style="left:677.6px;top:331.1px;font-size:15.2px;color:#222;letter-spacing:0.37px;">Karnataka</span>
<span class="t" style="left:794.4px;top:331.1px;font-size:15.2px;color:#222;letter-spacing:0.34px;">India</span>
<span class="t" style="left:567.0px;top:354.8px;font-size:15.2px;color:#222;letter-spacing:-0.3px;">Hassan</span>
<span class="t" style="left:677.6px;top:354.8px;font-size:15.2px;color:#222;letter-spacing:0.37px;">Karnataka</span>
<span class="t" style="left:794.4px;top:354.8px;font-size:15.2px;color:#222;letter-spacing:0.34px;">India</span>
<span class="t" style="left:567.0px;top:378.5px;font-size:15.2px;color:#222;letter-spacing:0.48px;">Udupi</span>
<span class="t" style="left:677.6px;top:378.5px;font-size:15.2px;color:#222;letter-spacing:0.37px;">Karnataka</span>
<span class="t" style="left:794.4px;top:378.5px;font-size:15.2px;color:#222;letter-spacing:0.34px;">India</span>
</body></html>
